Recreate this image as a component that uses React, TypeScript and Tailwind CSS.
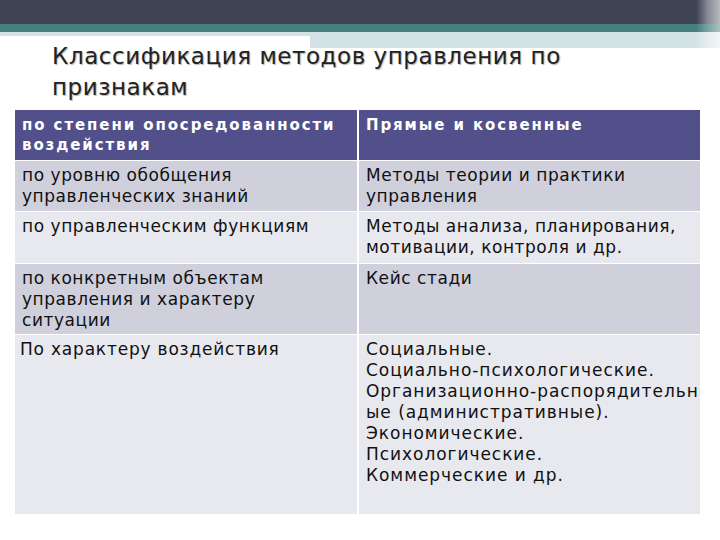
const rows = [
  {
    left: ['по уровню обобщения', 'управленческих знаний'],
    right: ['Методы теории и практики', 'управления'],
    h: 'h-[50px]',
    bg: 'bg-[#cfd0dc]',
  },
  {
    left: ['по управленческим функциям'],
    right: ['Методы анализа, планирования,', 'мотивации, контроля и др.'],
    h: 'h-[51px]',
    bg: 'bg-[#e8e8ef]',
  },
  {
    left: ['по конкретным объектам', 'управления и характеру', 'ситуации'],
    right: ['Кейс стади'],
    h: 'h-[70px]',
    bg: 'bg-[#cfd0dc]',
  },
];

const lastRight = [
  'Социальные.',
  'Социально-психологические.',
  'Организационно-распорядительн',
  'ые (административные).',
  'Экономические.',
  'Психологические.',
  'Коммерческие и др.',
];

function Lines({ lines }: { lines: string[] }) {
  return (
    <>
      {lines.map((l) => (
        <div key={l} className="whitespace-nowrap">
          {l}
        </div>
      ))}
    </>
  );
}

export default function App() {
  return (
    <div className="w-[720px] h-[540px] bg-white overflow-hidden font-['DejaVu_Sans',sans-serif] text-[#111]">
      {/* top decoration */}
      <div className="flex h-6 bg-[#404354]">
        <div className="flex-1" />
        <div className="w-[24px] bg-gradient-to-r from-[#404354] via-[#8a8a98] to-[#b8b8c0]" />
      </div>
      <div className="flex h-2 bg-[#45807f]">
        <div className="flex-1" />
        <div className="w-[24px] bg-gradient-to-r from-[#45807f] via-[#7aa3a3] to-[#a9c2c2]" />
      </div>
      <div className="flex items-start">
        <div className="w-[310px] h-1 bg-[#d3e2e4]" />
        <div className="flex-1 h-4 bg-[#d3e2e4]" />
        <div className="w-[24px] h-4 bg-gradient-to-r from-[#d3e2e4] via-[#e6eeef] to-[#f2f6f6]" />
      </div>

      <h1 className="relative pl-[52px] -mt-[7px] text-[23px] leading-[31px] tracking-[0.55px] text-[#222] [text-shadow:1px_1px_1px_rgba(0,0,0,0.3)]">
        <div>Классификация методов управления по</div>
        <div>признакам</div>
      </h1>

      <div className="ml-[15px] mt-[7px] w-[685px] grid grid-cols-[342px_minmax(0,1fr)] gap-x-[2px] gap-y-px bg-white">
        <div className="h-[50px] bg-[#52508a] text-white font-bold text-[15px] leading-[20px] tracking-[1.9px] px-[7px] pt-[5px]">
          <div>по степени опосредованности</div>
          <div>воздействия</div>
        </div>
        <div className="h-[50px] bg-[#52508a] text-white font-bold text-[15px] leading-[20px] tracking-[1.9px] px-[7px] pt-[5px]">
          Прямые и косвенные
        </div>

        {rows.map((r, i) => (
          <div key={i} className="contents">
            <div className={`${r.h} ${r.bg} px-[7px] pt-[4px] text-[17px] leading-[21px] tracking-[0.55px]`}>
              <Lines lines={r.left} />
            </div>
            <div className={`${r.h} ${r.bg} px-[7px] pt-[4px] text-[17px] leading-[21px] tracking-[0.55px]`}>
              <Lines lines={r.right} />
            </div>
          </div>
        ))}

        <div className="h-[179px] bg-[#e8e8ef] px-[5px] pt-[4px] text-[17px] leading-[21px] tracking-[0.8px]">
          По характеру воздействия
        </div>
        <div className="h-[179px] bg-[#e8e8ef] px-[7px] pt-[4px] text-[17px] leading-[21px] tracking-[0.95px]">
          <Lines lines={lastRight} />
        </div>
      </div>
    </div>
  );
}
